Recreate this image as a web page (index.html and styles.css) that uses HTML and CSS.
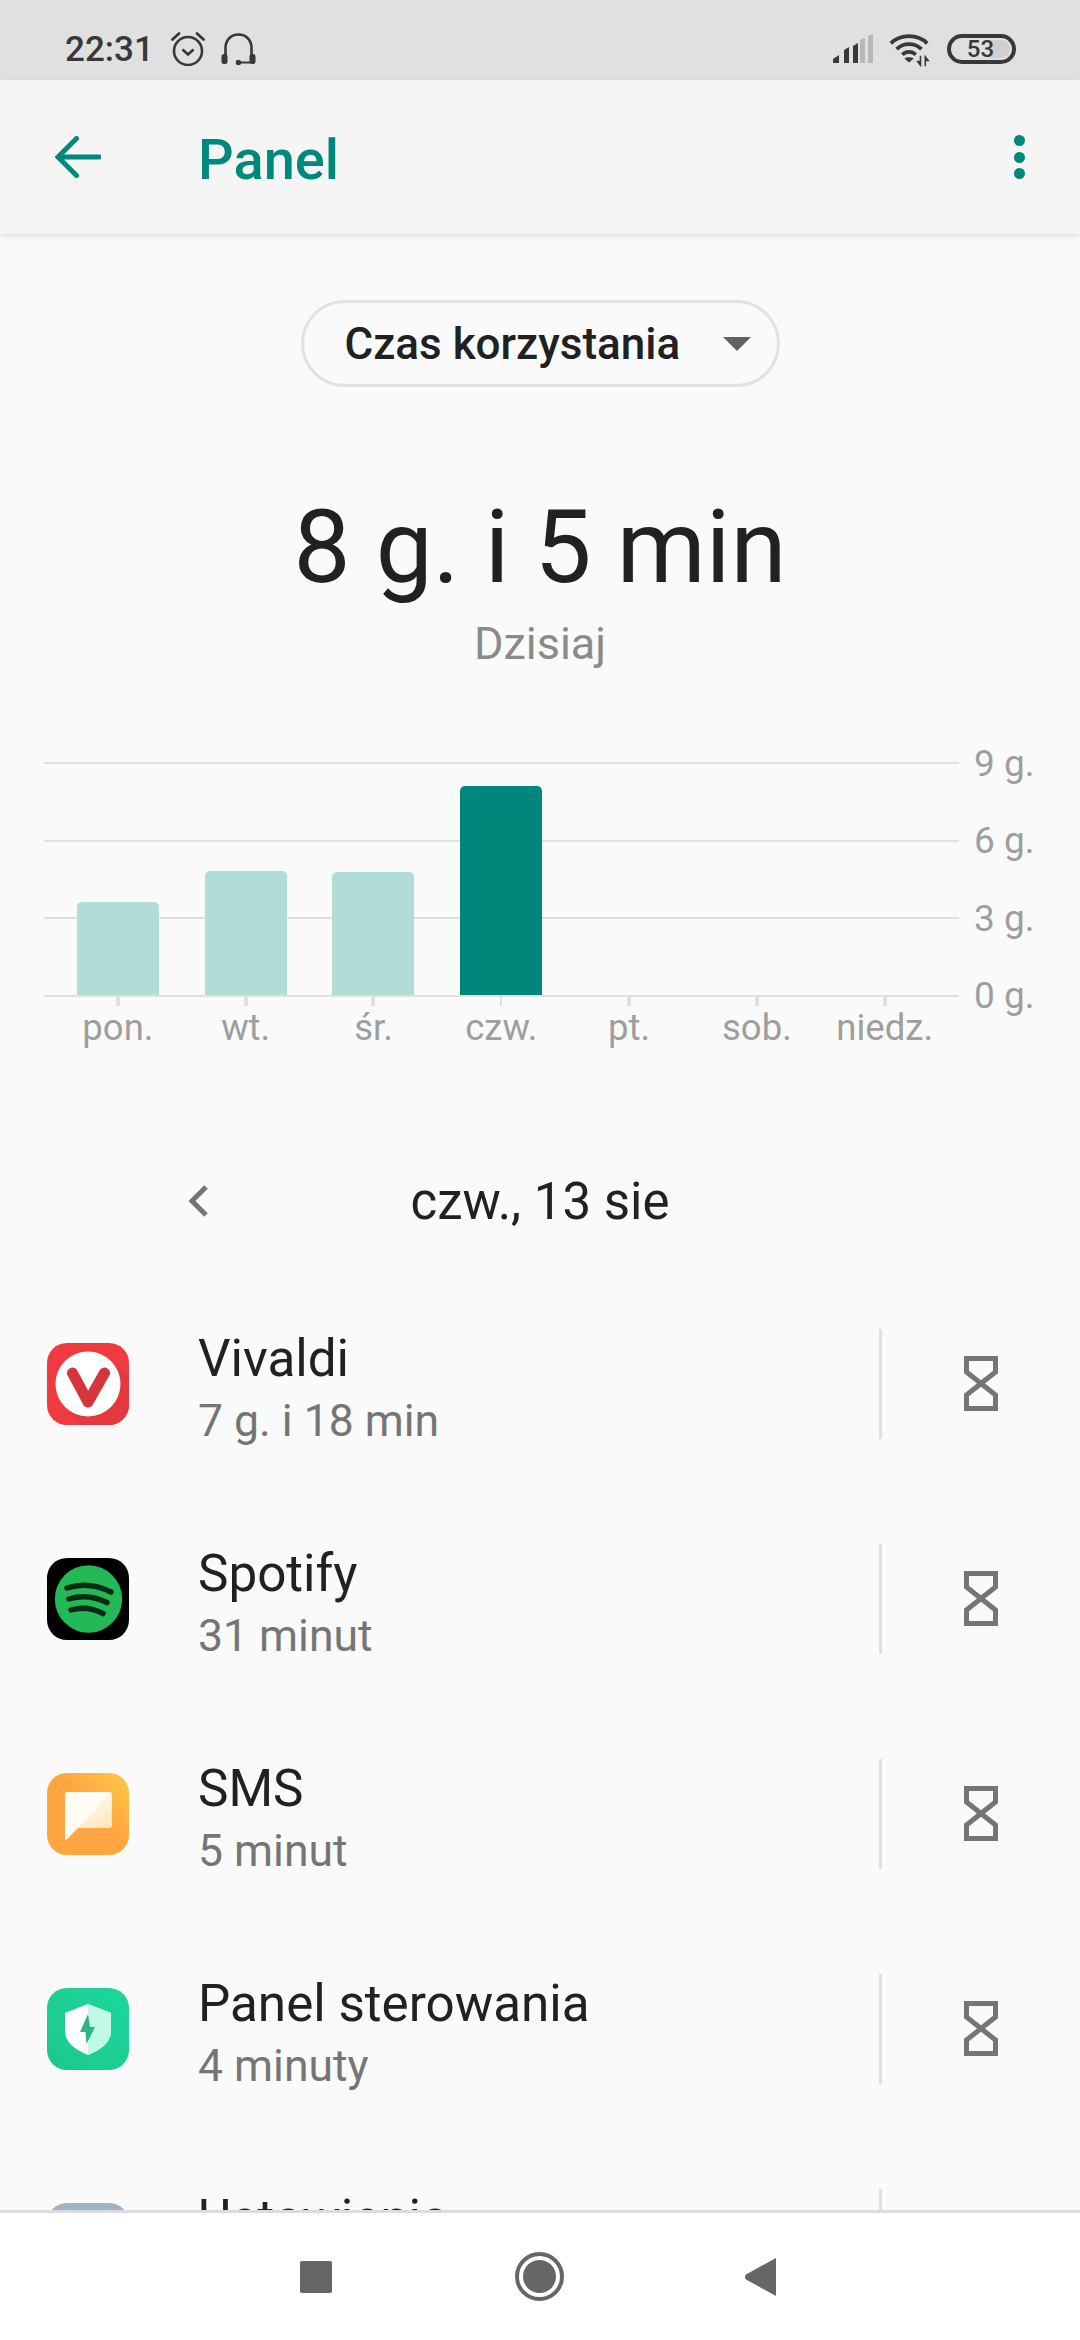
FILE: index.html
```html
<!DOCTYPE html>
<html lang="pl">
<head>
<meta charset="utf-8">
<title>Panel</title>
<link rel="stylesheet" href="styles.css">
</head>
<body>
<svg class="defs" width="0" height="0" aria-hidden="true">
  <symbol id="hourglass" viewBox="0 0 34 55"><path d="M2.5 2.5H31.5V16L2.5 39V52.5H31.5V39L2.5 16Z" fill="none" stroke="#757575" stroke-width="5" stroke-linejoin="miter"/></symbol>
</svg>
<div class="app">
  <header class="status">
    <span class="time">22:31</span>
    <svg class="ic-alarm" width="34" height="34" viewBox="0 0 34 34"><circle cx="17" cy="19" r="14" fill="none" stroke="#383838" stroke-width="2.6"/><path d="M11.5 17.5L17 22.5L22.5 17.5" fill="none" stroke="#383838" stroke-width="2.6"/><path d="M1.5 7.5L8 1.5M32.5 7.5L26 1.5" stroke="#383838" stroke-width="2.8" stroke-linecap="round"/></svg>
    <svg class="ic-head" width="35" height="33" viewBox="0 0 35 33"><path d="M4.500 28V15C4.500 7 10 1.500 17.500 1.500S30.500 7 30.500 15V28" fill="none" stroke="#383838" stroke-width="2.6"/><rect x="0.500" y="21" width="6" height="10" rx="2.500" fill="#383838"/><rect x="28.500" y="21" width="6" height="10" rx="2.500" fill="#383838"/><circle cx="17.500" cy="29.500" r="2.800" fill="#383838"/><path d="M17.500 29.500H30" stroke="#383838" stroke-width="2"/></svg>
    <span class="status-gap"></span>
    <svg class="ic-signal" width="40" height="30" viewBox="0 0 40 30"><path d="M0 29V25L6 21V29Z" fill="#383838"/><path d="M11 29V16L16 13V29Z" fill="#383838"/><path d="M20 29V12L25 9V29Z" fill="#383838"/><path d="M27 29V6L32 4V29Z" fill="#b8b8b8"/><path d="M35 29V2L40 0V29Z" fill="#b8b8b8"/></svg>
    <svg class="ic-wifi" width="42" height="34" viewBox="0 0 44 34"><path d="M2 10C12 0 30 0 40 10M8 16C15 9 27 9 34 16M14 22C18 18 24 18 28 22" fill="none" stroke="#383838" stroke-width="4"/><path d="M16 26C19 24 23 24 26 26L21 30Z" fill="#383838"/><path d="M33 23V33L30 29H33M38 34V24L41 28H38" fill="#383838" stroke="#383838" stroke-width="1.6"/></svg>
    <div class="battery"><span class="battery-fill"></span><span class="battery-num">53</span></div>
  </header>
  <div class="appbar">
    <svg class="ic-back" width="46" height="42" viewBox="0 0 46 42"><path d="M44 21H3M21.500 2.500L3 21L21.500 39.500" fill="none" stroke="#00897b" stroke-width="5" stroke-linecap="round" stroke-linejoin="miter"/></svg>
    <h1 class="title">Panel</h1>
    <div class="dots"><i></i><i></i><i></i></div>
  </div>
  <main class="content">
    <div class="picker"><div class="pill"><span>Czas korzystania</span><i class="caret"></i></div></div>
    <div class="big">8 g. i 5 min</div>
    <div class="today">Dzisiaj</div>
    <section class="chart">
      <div class="grid">
        <div class="gl"><i></i><span>9 g.</span></div>
        <div class="gl"><i></i><span>6 g.</span></div>
        <div class="gl"><i></i><span>3 g.</span></div>
        <div class="gl"><i></i><span>0 g.</span></div>
      </div>
      <div class="cols">
        <div class="col"><div class="slot"><div class="bar" style="height:93px"></div></div><i class="tick"></i><span>pon.</span></div>
        <div class="col"><div class="slot"><div class="bar" style="height:124px"></div></div><i class="tick"></i><span>wt.</span></div>
        <div class="col"><div class="slot"><div class="bar" style="height:123px"></div></div><i class="tick"></i><span>śr.</span></div>
        <div class="col"><div class="slot"><div class="bar on" style="height:209px"></div></div><i class="tick thin"></i><span>czw.</span></div>
        <div class="col"><div class="slot"></div><i class="tick"></i><span>pt.</span></div>
        <div class="col"><div class="slot"></div><i class="tick"></i><span>sob.</span></div>
        <div class="col"><div class="slot"></div><i class="tick"></i><span>niedz.</span></div>
      </div>
    </section>
    <div class="datenav">
      <svg class="ic-chev" width="20" height="32" viewBox="0 0 20 32"><path d="M18 2L4 16L18 30" fill="none" stroke="#757575" stroke-width="5"/></svg>
      <span>czw., 13 sie</span>
    </div>
    <ul class="list">
      <li class="row">
        <svg class="appicon" viewBox="0 0 82 82"><rect width="82" height="82" rx="20" fill="#ef3a3f"/><path d="M64 18L82 36V62A20 20 0 0 1 62 82H36L18 64Z" fill="#e5383e"/><circle cx="41" cy="41" r="32.500" fill="#fff"/><path d="M25.500 30L41 59M41 59L57.500 30" fill="none" stroke="#d8343b" stroke-width="11" stroke-linecap="round"/></svg>
        <div class="txt"><div class="name">Vivaldi</div><div class="sub">7 g. i 18 min</div></div>
        <div class="timer"><svg class="hg"><use href="#hourglass"/></svg></div>
      </li>
      <li class="row">
        <svg class="appicon" viewBox="0 0 82 82"><rect width="82" height="82" rx="20" fill="#000"/><circle cx="41.500" cy="41" r="33.700" fill="#22b956"/><path d="M20 30Q42 23 64 34M22 41Q41 35 60 44.500M24 52Q40 47 56 55.500" fill="none" stroke="#0b2a16" stroke-width="5.500" stroke-linecap="round"/></svg>
        <div class="txt"><div class="name">Spotify</div><div class="sub">31 minut</div></div>
        <div class="timer"><svg class="hg"><use href="#hourglass"/></svg></div>
      </li>
      <li class="row">
        <svg class="appicon" viewBox="0 0 82 82"><defs><linearGradient id="smsbg" x1="1" y1="0" x2="0.300" y2="0.700"><stop offset="0" stop-color="#ffcb47"/><stop offset="0.600" stop-color="#ffa640"/></linearGradient><linearGradient id="smsb" x1="0.600" y1="0.400" x2="1" y2="1"><stop offset="0" stop-color="#fff3dc"/><stop offset="1" stop-color="#ffdca8"/></linearGradient></defs><rect width="82" height="82" rx="20" fill="url(#smsbg)"/><path d="M21 19H62A3 3 0 0 1 65 22V52A3 3 0 0 1 62 55H31L20 66C19 67 18 66.500 18 65V22A3 3 0 0 1 21 19Z" fill="url(#smsb)"/><path d="M21 19H62A3 3 0 0 1 64.500 20.500L30 55L20 66C19 67 18 66.500 18 65V22A3 3 0 0 1 21 19Z" fill="#fffcf6"/></svg>
        <div class="txt"><div class="name">SMS</div><div class="sub">5 minut</div></div>
        <div class="timer"><svg class="hg"><use href="#hourglass"/></svg></div>
      </li>
      <li class="row">
        <svg class="appicon" viewBox="0 0 82 82"><defs><linearGradient id="panelbg" x1="1" y1="0" x2="0" y2="1"><stop offset="0" stop-color="#1ed6a0"/><stop offset="1" stop-color="#1cc88a"/></linearGradient></defs><rect width="82" height="82" rx="20" fill="url(#panelbg)"/><path d="M41 16L64 25V43C64 55 53 62 41 67C29 62 18 55 18 43V25Z" fill="#fff"/><path d="M41 16L64 25V43C64 55 53 62 41 67Z" fill="#c0f9e4"/><path d="M41 26L33 44H38.500L39.500 56L48 39H43Z" fill="#2fb389"/></svg>
        <div class="txt"><div class="name">Panel sterowania</div><div class="sub">4 minuty</div></div>
        <div class="timer"><svg class="hg"><use href="#hourglass"/></svg></div>
      </li>
      <li class="row">
        <svg class="appicon" viewBox="0 0 82 82"><rect width="82" height="82" rx="20" fill="#9fb3c4"/></svg>
        <div class="txt"><div class="name">Ustawienia</div><div class="sub"></div></div>
        <div class="timer"><svg class="hg"><use href="#hourglass"/></svg></div>
      </li>
    </ul>
  </main>
  <nav class="navbar">
    <svg width="32" height="32" viewBox="0 0 32 32"><rect width="32" height="32" rx="2" fill="#666"/></svg>
    <svg width="49" height="49" viewBox="0 0 49 49"><circle cx="24.500" cy="24.500" r="22.500" fill="none" stroke="#666" stroke-width="4"/><circle cx="24.500" cy="24.500" r="16.500" fill="#666"/></svg>
    <svg width="31" height="38" viewBox="0 0 31 38"><path d="M31 0V38L1 21.500C-0.300 20 -0.300 18 1 16.500Z" fill="#666"/></svg>
  </nav>
</div>
</body>
</html>
```
FILE: styles.css
```css
* { box-sizing: border-box; }
html, body { margin: 0; padding: 0; }
body { font-family: Roboto, "Noto Sans", sans-serif; background: #fafafa; color: #212121; }
.defs { position: absolute; }
i { display: block; }

.app { width: 1080px; height: 2340px; display: flex; flex-direction: column; overflow: hidden; }

.status { flex: 0 0 80px; background: #e0e0e0; display: flex; align-items: center; padding: 18px 64px 0 65px; color: #383838; }
.time { font-size: 35px; font-weight: 500; width: 106px; }
.ic-head { margin-left: 16px; }
.status-gap { flex: 1; }
.ic-signal { margin-right: 16px; }
.ic-wifi { margin-right: 16px; margin-top: 2px; }
.battery { width: 69px; height: 30px; border: 4px solid #383838; border-radius: 15px; position: relative; display: flex; align-items: center; justify-content: center; }
.battery-fill { position: absolute; left: 38px; top: 2px; bottom: 2px; right: 2px; border-radius: 0 9px 9px 0; background: #cfcfcf; }
.battery-num { position: relative; font-size: 24px; font-weight: 500; color: #383838; line-height: 22px; margin-left: -2px; }

.appbar { flex: 0 0 154px; background: #f5f5f5; display: flex; align-items: center; padding: 0 55px 0 55px; box-shadow: 0 2px 5px rgba(0,0,0,.12); position: relative; z-index: 1; }
.title { margin: 0 0 0 97px; padding-top: 6px; flex: 1; font-size: 56px; font-weight: 500; color: #00897b; line-height: 60px; }
.dots { display: flex; flex-direction: column; gap: 5.500px; }
.dots i { width: 11px; height: 11px; border-radius: 50%; background: #00897b; }

.content { flex: 1 1 0; min-height: 0; overflow: hidden; background: #fafafa; }

.picker { display: flex; justify-content: center; padding-top: 66px; }
.pill { width: 479px; height: 87px; border: 3px solid #e0e0e6; border-radius: 44px; display: flex; align-items: center; padding-left: 41px; font-size: 44px; font-weight: 500; color: #212121; }
.caret { margin-left: 43px; width: 0; height: 0; border-left: 14px solid transparent; border-right: 14px solid transparent; border-top: 14px solid #5f6368; }

.big { margin-top: 101px; text-align: center; font-size: 101.500px; line-height: 120px; color: #212121; }
.today { text-align: center; font-size: 45px; line-height: 50px; color: #8a8a8a; margin-top: 11px; }

.chart { position: relative; margin: 93px 0 0 44px; width: 1036px; height: 280px; }
.grid { position: absolute; left: 0; top: 0; display: flex; flex-direction: column; gap: 75.670px; }
.gl { height: 2px; display: flex; align-items: center; }
.gl i { width: 915px; height: 2px; background: #e0e0e0; }
.gl span { margin-left: 15px; font-size: 37px; color: #9e9e9e; white-space: nowrap; }
.cols { position: relative; display: flex; padding-left: 10px; }
.col { width: 127.800px; display: flex; flex-direction: column; align-items: center; font-size: 36.500px; line-height: 44px; color: #9e9e9e; }
.slot { height: 233px; display: flex; align-items: flex-end; }
.bar { width: 82px; background: #b2dcd6; border-radius: 5px 5px 0 0; }
.bar.on { background: #00867a; }
.tick { width: 4px; height: 11px; background: #e0e0e0; }
.tick.thin { width: 2px; }

.datenav { position: relative; margin-top: 129px; height: 60px; display: flex; align-items: center; justify-content: center; font-size: 51px; color: #212121; }
.ic-chev { position: absolute; left: 188px; top: 14px; }

.list { list-style: none; margin: 45px 0 0; padding: 0; }
.row { height: 215px; display: flex; align-items: center; padding-left: 47px; }
.appicon { width: 82px; height: 82px; flex: none; }
.txt { margin-left: 69px; width: 681px; padding-top: 9px; }
.name { font-size: 51.200px; line-height: 60px; color: #212121; }
.sub { font-size: 44.500px; line-height: 52px; min-height: 52px; color: #757575; margin-top: 6px; }
.timer { width: 199px; height: 110px; border-left: 3px solid #e0e0e0; display: flex; align-items: center; padding-left: 82px; }
.hg { width: 34px; height: 55px; }

.navbar { flex: 0 0 130px; background: #fff; border-top: 3px solid #dcdcdc; position: relative; display: flex; align-items: center; padding-left: 300px; }
.navbar svg:nth-child(2) { margin-left: 183px; }
.navbar svg:nth-child(3) { margin-left: 181px; }
```
